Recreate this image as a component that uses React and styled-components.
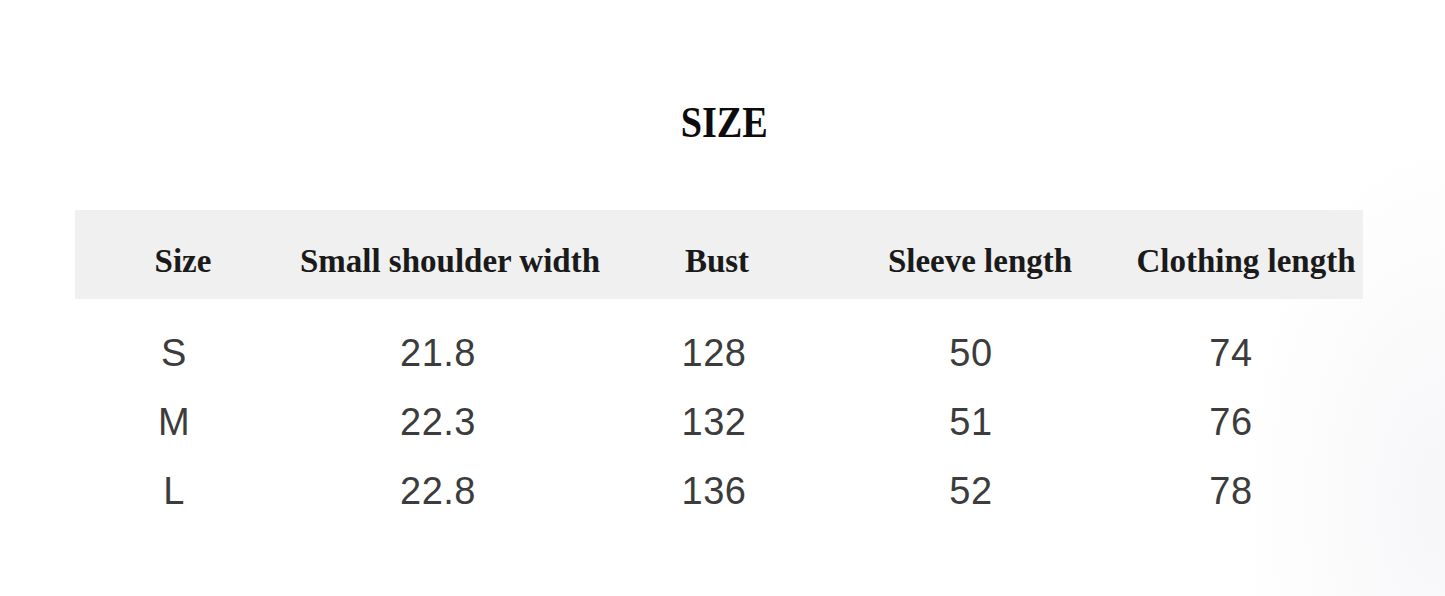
import React from "react";
import styled, { createGlobalStyle } from "styled-components";

const Global = createGlobalStyle`
  html, body { margin: 0; padding: 0; background: #ffffff; }
  body { width: 1445px; height: 596px; overflow: hidden; }
`;

const Page = styled.div`
  width: 1445px;
  height: 596px;
  box-sizing: border-box;
  padding: 90px 82px 0 75px;
  background:
    radial-gradient(ellipse 260px 460px at 1445px 500px, rgba(244,244,247,0.8), rgba(255,255,255,0) 80%),
    #ffffff;
`;

const Title = styled.h1`
  margin: 0 0 56px 0;
  padding-left: 11px;
  height: 64px;
  display: flex;
  align-items: center;
  justify-content: center;
  font-family: "Liberation Serif", "Times New Roman", serif;
  font-weight: 700;
  font-size: 45px;
  color: #0c0c0c;
  line-height: 1;
  span {
    display: inline-block;
    transform: scaleX(0.85);
  }
`;

const Table = styled.div`
  width: 1288px;
  display: flex;
  flex-direction: column;
`;

const HeadRow = styled.div`
  height: 89px;
  box-sizing: border-box;
  padding-top: 13px;
  background: #f0f0f0;
  display: grid;
  grid-template-columns: 216px 318px 216px 310px 222px;
  align-items: center;
`;

const HeadCell = styled.div`
  font-family: "Liberation Serif", "Times New Roman", serif;
  font-weight: 700;
  font-size: 33px;
  line-height: 1;
  color: #1a1a1a;
  text-align: center;
  white-space: nowrap;
`;

const Body = styled.div`
  margin-top: 19px;
  display: flex;
  flex-direction: column;
`;

const Row = styled.div`
  height: 69px;
  display: grid;
  grid-template-columns: 198px 330px 222px 292px 228px;
  align-items: center;
`;

const Cell = styled.div`
  font-family: "Liberation Sans", Arial, sans-serif;
  font-size: 38px;
  line-height: 1;
  color: #3c3c3c;
  text-align: center;
  letter-spacing: 0.5px;
`;

const headers = ["Size", "Small shoulder width", "Bust", "Sleeve length", "Clothing length"];
const rows = [
  ["S", "21.8", "128", "50", "74"],
  ["M", "22.3", "132", "51", "76"],
  ["L", "22.8", "136", "52", "78"],
];

export default function App() {
  return (
    <>
      <Global />
      <Page>
        <Title><span>SIZE</span></Title>
        <Table>
          <HeadRow>
            {headers.map((h) => (
              <HeadCell key={h}>{h}</HeadCell>
            ))}
          </HeadRow>
          <Body>
            {rows.map((r) => (
              <Row key={r[0]}>
                {r.map((c, i) => (
                  <Cell key={i}>{c}</Cell>
                ))}
              </Row>
            ))}
          </Body>
        </Table>
      </Page>
    </>
  );
}
